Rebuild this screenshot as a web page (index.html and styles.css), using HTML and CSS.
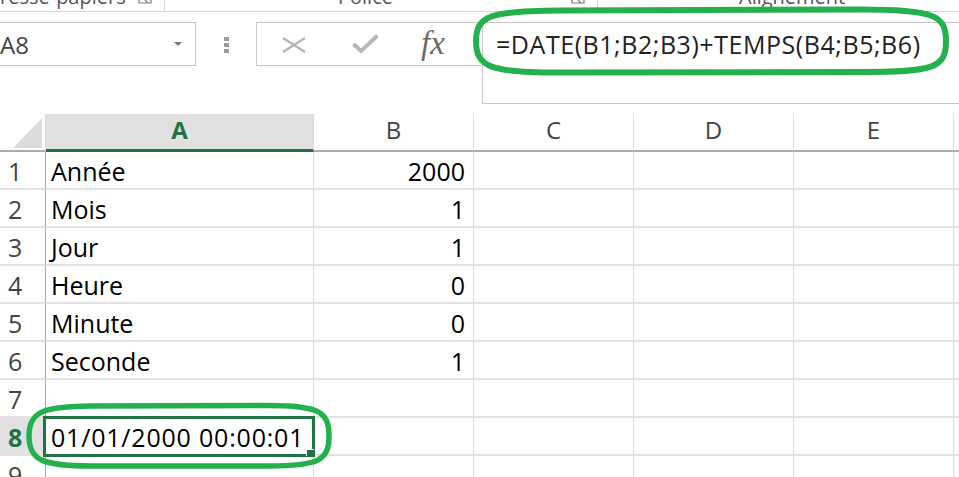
FILE: index.html
```html
<!DOCTYPE html>
<html lang="fr">
<head>
<meta charset="utf-8">
<title>Excel DATE + TEMPS</title>
<link rel="stylesheet" href="styles.css">
</head>
<body>
<div class="ribbon">
  <div class="grp g1"><span class="lbl">resse-papiers</span><svg class="launcher" width="16" height="11" viewBox="0 0 16 11"><path d="M2 0 V3 H14 V0 M8 0 L11 3" fill="none" stroke="#7a7a7a" stroke-width="1.2"/></svg></div>
  <div class="grp g2"><span class="lbl lbl2">Police</span><svg class="launcher" width="16" height="11" viewBox="0 0 16 11"><path d="M2 0 V3 H14 V0 M8 0 L11 3" fill="none" stroke="#7a7a7a" stroke-width="1.2"/></svg></div>
  <div class="grp g3"><span class="lbl lbl3">Alignement</span></div>
</div>

<div class="fbar">
  <div class="namebox"><span class="ref">A8</span><span class="arrow"></span></div>
  <div class="grip"><i></i><i></i><i></i></div>
  <div class="fxbox">
    <svg class="ico-x" width="24" height="16" viewBox="0 0 24 16"><path d="M1 1 L23 15 M23 1 L1 15" stroke="#b4b4b4" stroke-width="2.2" fill="none"/></svg>
    <svg class="ico-ok" width="27" height="19" viewBox="0 0 27 19"><path d="M1.5 10 L9 17 L25.5 1.5" stroke="#b8b8b8" stroke-width="4" fill="none"/></svg>
    <span class="fx">fx</span>
  </div>
  <div class="formula">=DATE(B1;B2;B3)+TEMPS(B4;B5;B6)</div>
</div>

<div class="sheet">
  <div class="corner"><svg width="45" height="36" viewBox="0 0 45 36"><polygon points="13,34 42,4 42,34" fill="#dcdcdc"/></svg></div>
  <div class="ch sel">A</div>
  <div class="ch">B</div>
  <div class="ch">C</div>
  <div class="ch">D</div>
  <div class="ch">E</div>
  <div class="ch last"></div>

  <div class="rh">1</div><div class="c">Année</div><div class="c num">2000</div><div class="c"></div><div class="c"></div><div class="c"></div><div class="c last"></div>
  <div class="rh">2</div><div class="c">Mois</div><div class="c num">1</div><div class="c"></div><div class="c"></div><div class="c"></div><div class="c last"></div>
  <div class="rh">3</div><div class="c">Jour</div><div class="c num">1</div><div class="c"></div><div class="c"></div><div class="c"></div><div class="c last"></div>
  <div class="rh">4</div><div class="c">Heure</div><div class="c num">0</div><div class="c"></div><div class="c"></div><div class="c"></div><div class="c last"></div>
  <div class="rh">5</div><div class="c">Minute</div><div class="c num">0</div><div class="c"></div><div class="c"></div><div class="c"></div><div class="c last"></div>
  <div class="rh">6</div><div class="c">Seconde</div><div class="c num">1</div><div class="c"></div><div class="c"></div><div class="c"></div><div class="c last"></div>
  <div class="rh">7</div><div class="c"></div><div class="c"></div><div class="c"></div><div class="c"></div><div class="c"></div><div class="c last"></div>
  <div class="rh sel">8</div><div class="c active"><span class="dt">01/01/2000 00:00:01</span></div><div class="c"></div><div class="c"></div><div class="c"></div><div class="c"></div><div class="c last"></div>
  <div class="rh">9</div><div class="c"></div><div class="c"></div><div class="c"></div><div class="c"></div><div class="c"></div><div class="c last"></div>
</div>

<svg class="marks" width="959" height="477" viewBox="0 0 959 477">
  <path d="M476 41 C476 15 492 11 560 10.5 L860 9.5 C934 9.5 946 15 946 41 C946 68 934 72 860 72 L560 72.5 C492 72.5 476 68 476 41 Z" fill="none" stroke="#22b14c" stroke-width="6"/>
  <path d="M29 436 C29 411 44 406.5 92 406 L268 405.5 C318 405.5 329 411 329 436 C329 461 318 466 268 466 L92 466 C44 466 29 461 29 436 Z" fill="none" stroke="#22b14c" stroke-width="5.5"/>
</svg>
</body>
</html>
```

FILE: styles.css
```css
* { box-sizing: border-box; }
html, body { margin: 0; padding: 0; }
body {
  width: 959px;
  height: 477px;
  overflow: hidden;
  background: #fff;
  position: relative;
  font-family: "Open Sans", "Noto Sans", sans-serif;
  color: #000;
}

/* ribbon group labels (cut off at top) */
.ribbon {
  height: 12px;
  border-bottom: 1px solid #d5d5d5;
  display: flex;
  overflow: hidden;
}
.grp {
  display: flex;
  align-items: flex-start;
  border-right: 1px solid #d5d5d5;
  height: 11px;
}
.g1 { width: 165px; }
.g2 { width: 433px; }
.g3 { flex: 1; border-right: none; }
.lbl {
  font-size: 20px;
  line-height: 27px;
  margin-top: -17px;
  color: #555;
  white-space: nowrap;
}
.lbl2 { margin-left: 173px; }
.lbl3 { margin-left: 141px; }
.launcher { margin-left: auto; margin-right: 11px; display: block; }

/* formula bar row */
.fbar {
  display: flex;
  align-items: flex-start;
  margin-top: 10px;
}
.namebox {
  width: 198px;
  margin-left: -2px;
  height: 44px;
  border: 1px solid #c6c6c6;
  display: flex;
  align-items: center;
  justify-content: space-between;
  padding-right: 13px;
}
.ref {
  font-size: 24px;
  color: #444;
  margin-left: 1px;
}
.arrow {
  width: 0;
  height: 0;
  border-left: 4px solid transparent;
  border-right: 4px solid transparent;
  border-top: 4px solid #777;
}
.grip {
  width: 60px;
  display: flex;
  flex-direction: column;
  align-items: center;
  gap: 2px;
  padding-top: 15px;
}
.grip i {
  display: block;
  width: 5px;
  height: 4px;
  background: #9c9c9c;
}
.fxbox {
  width: 226px;
  height: 44px;
  border: 1px solid #c6c6c6;
  border-right: none;
  display: flex;
  align-items: center;
}
.ico-x { margin-left: 25px; display: block; margin-top: 2px; }
.ico-ok { margin-left: 46px; display: block; margin-top: -1px; }
.fx {
  margin-left: 42px;
  font-family: "Liberation Serif", "DejaVu Serif", serif;
  font-style: italic;
  font-size: 33px;
  line-height: 40px;
  color: #6a6a6a;
  margin-top: -2px;
}
.formula {
  flex: 1;
  height: 82px;
  border: 1px solid #c6c6c6;
  border-right: none;
  padding: 4px 0 0 13px;
  font-size: 25px;
  line-height: 34px;
  letter-spacing: 0.55px;
  color: #222;
  white-space: nowrap;
}

/* sheet grid */
.sheet {
  margin-top: 10px;
  display: grid;
  grid-template-columns: 46px 268px 160px 160px 160px 160px 1fr;
  grid-template-rows: repeat(10, 38px);
  font-size: 25px;
}
.corner {
  border-right: 1px solid #dadada;
  border-bottom: 2px solid #ababab;
}
.corner svg { display: block; }
.ch {
  border-right: 1px solid #dadada;
  border-bottom: 2px solid #ababab;
  text-align: center;
  font-size: 24px;
  line-height: 32px;
  color: #444;
}
.ch.sel {
  background: #e1e1e1;
  color: #217346;
  font-weight: 700;
  border-bottom: 3px solid #217346;
}
.ch.last, .c.last { border-right: none; }
.rh {
  border-right: 1px solid #a8a8a8;
  border-bottom: 2px solid #e3e3e3;
  color: #444;
  padding: 2px 0 0 8px;
  line-height: 34px;
}
.rh.sel {
  background: #e1e1e1;
  color: #217346;
  font-weight: 700;
}
.c {
  border-right: 1px solid #dadada;
  border-bottom: 2px solid #e3e3e3;
  padding: 2px 5px 0 5px;
  line-height: 34px;
  white-space: nowrap;
}
.num { text-align: right; padding-right: 8px; }
.active { position: relative; }
.active::after {
  content: "";
  position: absolute;
  left: -3px;
  top: -2px;
  right: -2px;
  bottom: -3px;
  border: 3px solid #217346;
  z-index: 2;
}
.active::before {
  content: "";
  position: absolute;
  right: -2px;
  bottom: -3px;
  width: 8px;
  height: 7px;
  background: #217346;
  box-shadow: -1px -1px 0 #fff;
  z-index: 3;
}
.dt { letter-spacing: 0.8px; }

/* hand-drawn annotation ellipses */
.marks {
  position: absolute;
  left: 0;
  top: 0;
  pointer-events: none;
  z-index: 10;
}
```
